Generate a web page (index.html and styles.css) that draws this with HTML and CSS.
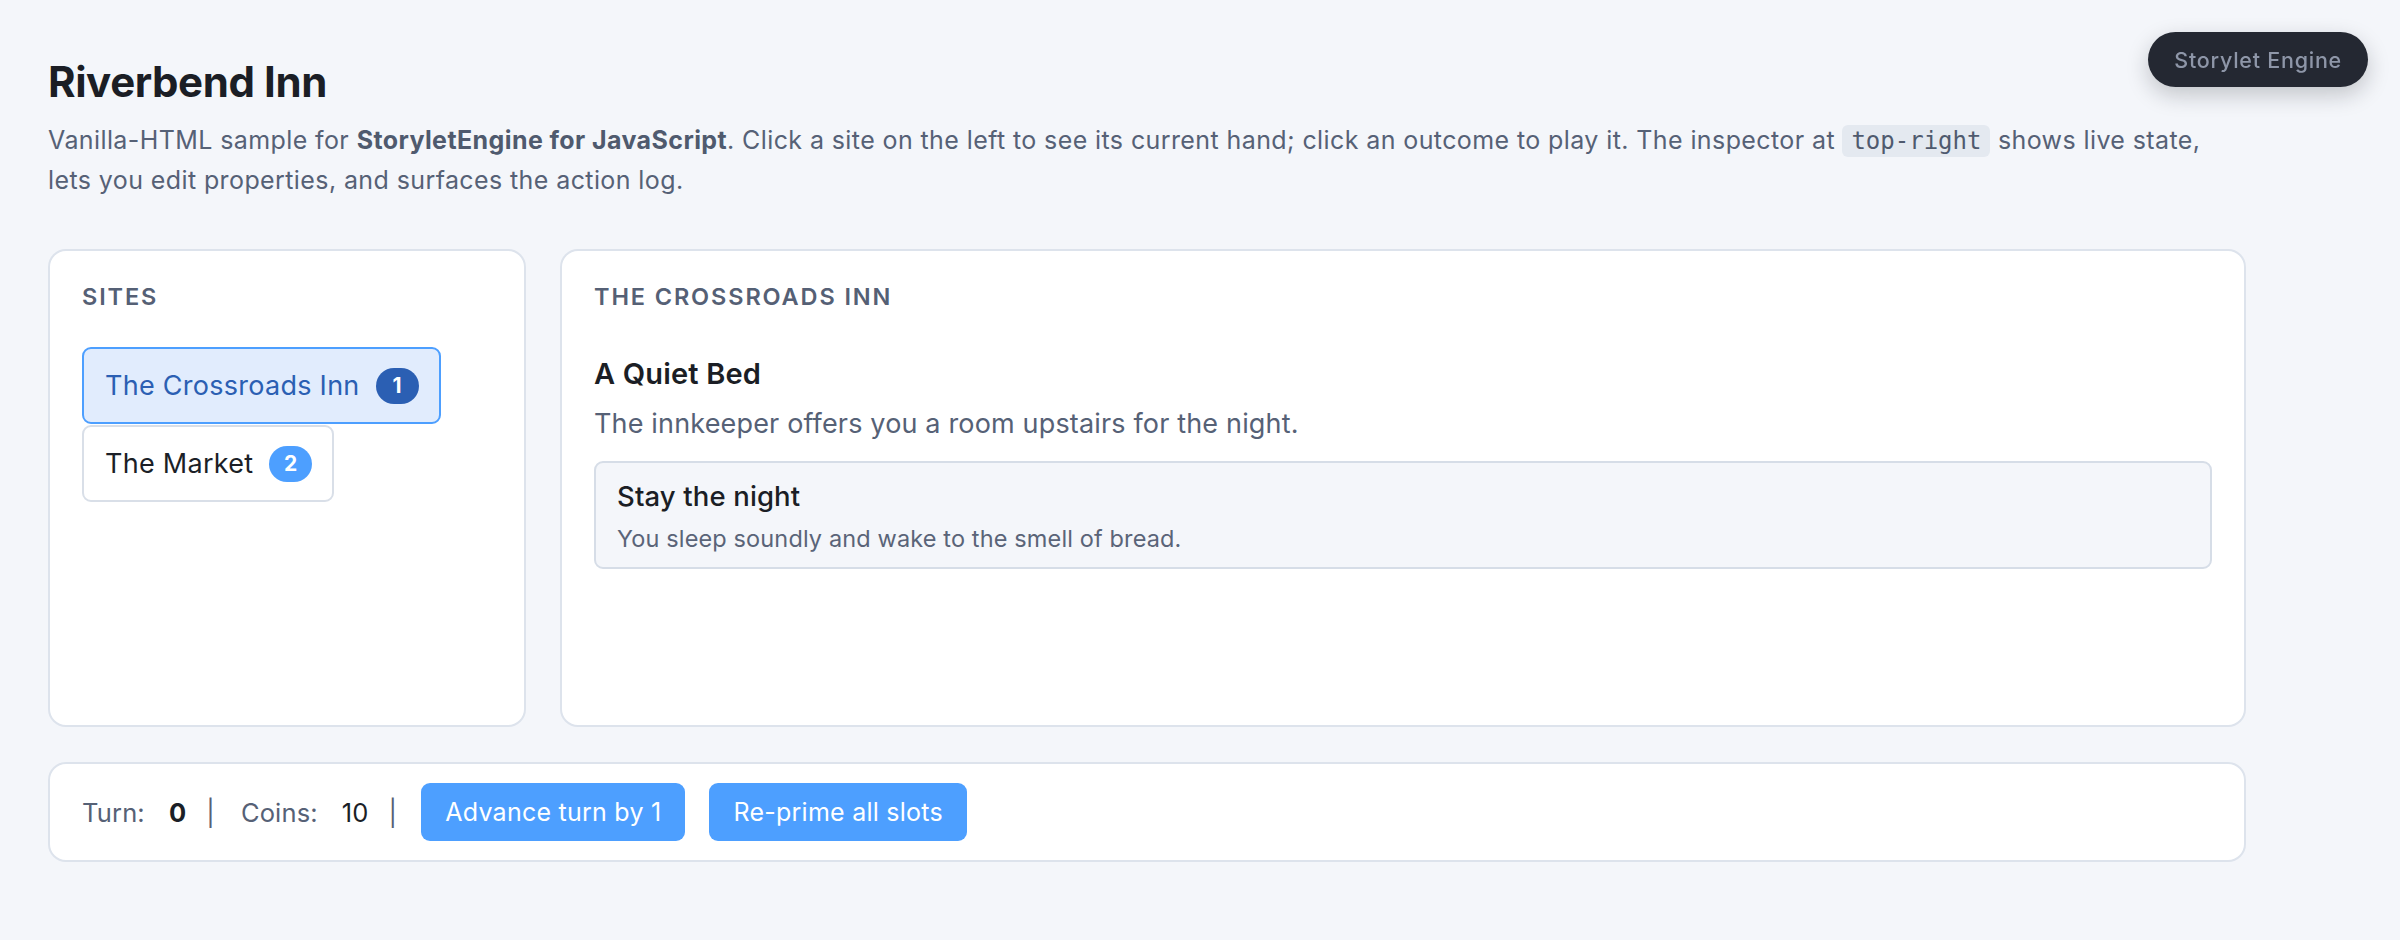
FILE: index.html
```html
<!DOCTYPE html>
<html lang="en">
<head>
<meta charset="utf-8">
<title>Riverbend Inn</title>
<link rel="stylesheet" href="styles.css">
</head>
<body>
<div class="inspector-toggle">Storylet Engine</div>
<main class="page">
  <h1 class="title">Riverbend Inn</h1>
  <p class="intro">Vanilla-HTML sample for <strong>StoryletEngine for JavaScript</strong>. Click a site on the left to see its current hand; click an outcome to play it. The inspector at <code>top-right</code> shows live state, lets you edit properties, and surfaces the action log.</p>

  <section class="board">
    <aside class="panel sites">
      <h2 class="panel-label">Sites</h2>
      <div class="site-list">
        <button class="site active">The Crossroads Inn <span class="count">1</span></button>
        <button class="site">The Market <span class="count">2</span></button>
      </div>
    </aside>
    <section class="panel hand">
      <h2 class="panel-label">The Crossroads Inn</h2>
      <article class="storylet">
        <h3 class="storylet-title">A Quiet Bed</h3>
        <p class="storylet-text">The innkeeper offers you a room upstairs for the night.</p>
        <button class="outcome">
          <span class="outcome-title">Stay the night</span>
          <span class="outcome-text">You sleep soundly and wake to the smell of bread.</span>
        </button>
      </article>
    </section>
  </section>

  <footer class="panel status">
    <span class="stat-label">Turn:</span>
    <span class="stat-value strong">0</span>
    <span class="sep">|</span>
    <span class="stat-label">Coins:</span>
    <span class="stat-value">10</span>
    <span class="sep">|</span>
    <button class="action">Advance turn by 1</button>
    <button class="action">Re-prime all slots</button>
  </footer>
</main>
</body>
</html>
```

FILE: styles.css
```css
* { box-sizing: border-box; }

html, body {
  margin: 0;
  padding: 0;
  background: #f4f6fa;
}

body {
  font-family: Inter, "Noto Sans", "Liberation Sans", sans-serif;
  color: #1b1f27;
  letter-spacing: 0.01em;
}

.page {
  width: 2198px;
  margin-left: 48px;
  padding-top: 57px;
}

.title {
  margin: 0;
  font-size: 42px;
  line-height: 1.2;
  font-weight: 700;
  letter-spacing: -0.01em;
  color: #1b1e25;
}

.intro {
  margin: 14px 0 0;
  font-size: 25px;
  line-height: 38.4px;
  letter-spacing: 0.016em;
  color: #566176;
}

.intro strong {
  font-weight: 700;
  color: #4f5a6e;
}

.intro code {
  font-family: "DejaVu Sans Mono", "Liberation Mono", monospace;
  font-size: 24px;
  letter-spacing: 0;
  background: #e4e9f0;
  border-radius: 6px;
  padding: 2px 9px;
  color: #4f5a6e;
}

/* floating inspector pill */
.inspector-toggle {
  position: fixed;
  top: 32px;
  right: 32px;
  height: 55px;
  padding: 0 26px;
  border-radius: 28px;
  background: #242832;
  color: #8e96a8;
  font-size: 21.5px;
  font-weight: 500;
  letter-spacing: 0.035em;
  display: flex;
  align-items: center;
  box-shadow: 0 8px 22px rgba(20, 24, 34, 0.22);
}

.board {
  margin-top: 50px;
  display: grid;
  grid-template-columns: 478px 1fr;
  gap: 34px;
  height: 478px;
}

.panel {
  background: #ffffff;
  border: 2px solid #dde3ec;
  border-radius: 18px;
  padding: 32px;
}

.panel-label {
  margin: 0;
  font-size: 23.5px;
  line-height: 28px;
  font-weight: 600;
  letter-spacing: 0.08em;
  text-transform: uppercase;
  color: #556075;
}

.site-list {
  margin-top: 36px;
  display: flex;
  flex-direction: column;
  align-items: flex-start;
  gap: 1px;
}

.site {
  font-family: inherit;
  font-size: 27px;
  letter-spacing: 0.01em;
  line-height: 39px;
  color: #1b1f27;
  background: #ffffff;
  border: 2px solid #d9dfe8;
  border-radius: 9px;
  padding: 17px 20px 17px 21px;
  display: flex;
  align-items: center;
  gap: 16px;
  cursor: pointer;
}

.site.active {
  background: #e1ecfd;
  border-color: #4d9fff;
  color: #2b5fb3;
}

.count {
  display: inline-flex;
  align-items: center;
  justify-content: center;
  min-width: 43px;
  height: 36px;
  padding: 0 14px;
  border-radius: 18px;
  background: #4d9fff;
  color: #ffffff;
  font-size: 21px;
  font-weight: 700;
}

.site.active .count {
  background: #2b5fb3;
}

.storylet-title {
  margin: 44px 0 0;
  font-size: 29px;
  line-height: 37px;
  font-weight: 600;
  color: #1b1e25;
}

.storylet-text {
  margin: 12px 0 0;
  font-size: 27px;
  line-height: 40px;
  color: #566176;
}

.outcome {
  margin-top: 17px;
  width: 100%;
  display: flex;
  flex-direction: column;
  align-items: flex-start;
  text-align: left;
  font-family: inherit;
  letter-spacing: 0.01em;
  background: #f4f6fa;
  border: 2px solid #d6dde7;
  border-radius: 9px;
  padding: 16px 21px 12px;
  cursor: pointer;
}

.outcome-title {
  font-size: 27.5px;
  line-height: 1.25;
  font-weight: 500;
  color: #1b1e25;
}

.outcome-text {
  margin-top: 9px;
  font-size: 23.5px;
  line-height: 1.4;
  color: #5a6478;
}

.status {
  margin-top: 35px;
  height: 100px;
  padding: 0 32px;
  display: flex;
  align-items: center;
  font-size: 25.5px;
}

.stat-label { color: #566176; }
.stat-value { color: #1b1f27; margin-left: 24px; }
.stat-value.strong { font-weight: 700; }
.sep { color: #566176; margin-left: 20px; }
.sep + .stat-label { margin-left: 26px; }

.action {
  font-family: inherit;
  font-size: 25px;
  letter-spacing: 0.01em;
  height: 58px;
  padding: 0 24px;
  border: none;
  border-radius: 9px;
  background: #4d9fff;
  color: #ffffff;
  cursor: pointer;
}

.sep + .action { margin-left: 24px; }
.action + .action { margin-left: 24px; }
```
